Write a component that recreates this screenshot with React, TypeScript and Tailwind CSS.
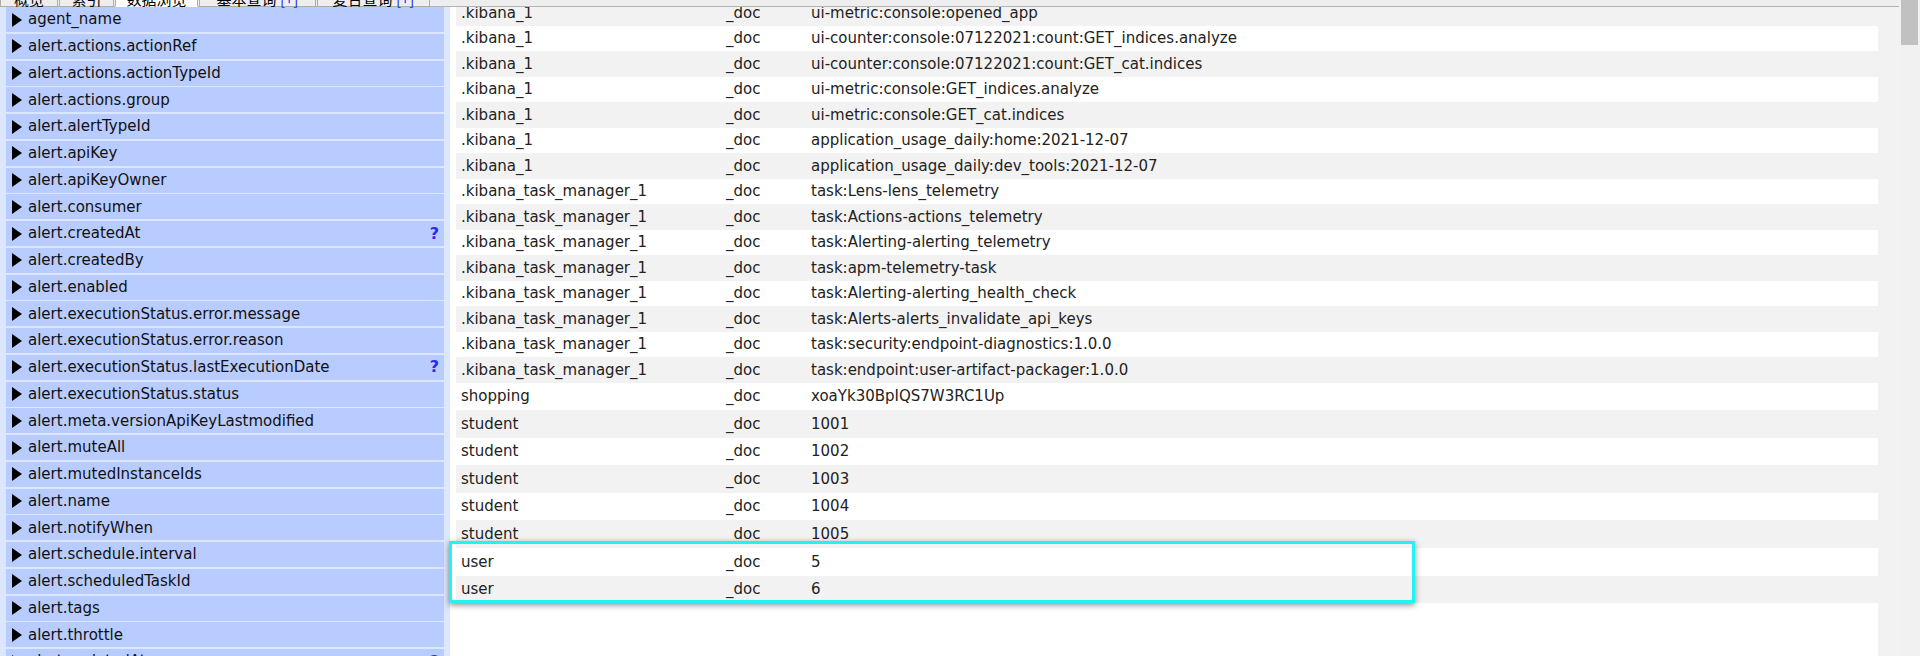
import React from "react";

const fields: { name: string; q?: boolean }[] = [
  { name: "agent_name" },
  { name: "alert.actions.actionRef" },
  { name: "alert.actions.actionTypeId" },
  { name: "alert.actions.group" },
  { name: "alert.alertTypeId" },
  { name: "alert.apiKey" },
  { name: "alert.apiKeyOwner" },
  { name: "alert.consumer" },
  { name: "alert.createdAt", q: true },
  { name: "alert.createdBy" },
  { name: "alert.enabled" },
  { name: "alert.executionStatus.error.message" },
  { name: "alert.executionStatus.error.reason" },
  { name: "alert.executionStatus.lastExecutionDate", q: true },
  { name: "alert.executionStatus.status" },
  { name: "alert.meta.versionApiKeyLastmodified" },
  { name: "alert.muteAll" },
  { name: "alert.mutedInstanceIds" },
  { name: "alert.name" },
  { name: "alert.notifyWhen" },
  { name: "alert.schedule.interval" },
  { name: "alert.scheduledTaskId" },
  { name: "alert.tags" },
  { name: "alert.throttle" },
  { name: "alert.updatedAt", q: true },
];

const rows: [string, string, string][] = [
  [".kibana_1", "_doc", "ui-metric:console:opened_app"],
  [".kibana_1", "_doc", "ui-counter:console:07122021:count:GET_indices.analyze"],
  [".kibana_1", "_doc", "ui-counter:console:07122021:count:GET_cat.indices"],
  [".kibana_1", "_doc", "ui-metric:console:GET_indices.analyze"],
  [".kibana_1", "_doc", "ui-metric:console:GET_cat.indices"],
  [".kibana_1", "_doc", "application_usage_daily:home:2021-12-07"],
  [".kibana_1", "_doc", "application_usage_daily:dev_tools:2021-12-07"],
  [".kibana_task_manager_1", "_doc", "task:Lens-lens_telemetry"],
  [".kibana_task_manager_1", "_doc", "task:Actions-actions_telemetry"],
  [".kibana_task_manager_1", "_doc", "task:Alerting-alerting_telemetry"],
  [".kibana_task_manager_1", "_doc", "task:apm-telemetry-task"],
  [".kibana_task_manager_1", "_doc", "task:Alerting-alerting_health_check"],
  [".kibana_task_manager_1", "_doc", "task:Alerts-alerts_invalidate_api_keys"],
  [".kibana_task_manager_1", "_doc", "task:security:endpoint-diagnostics:1.0.0"],
  [".kibana_task_manager_1", "_doc", "task:endpoint:user-artifact-packager:1.0.0"],
  ["shopping", "_doc", "xoaYk30BpIQS7W3RC1Up"],
  ["student", "_doc", "1001"],
  ["student", "_doc", "1002"],
  ["student", "_doc", "1003"],
  ["student", "_doc", "1004"],
  ["student", "_doc", "1005"],
  ["user", "_doc", "5"],
  ["user", "_doc", "6"],
];

const tabs: { label: string; plus?: boolean; w: string; active?: boolean }[] = [
  { label: "概览", w: "w-[58px]" },
  { label: "索引", w: "w-[55px]" },
  { label: "数据浏览", w: "w-[83px]", active: true },
  { label: "基本查询", w: "w-[117px]", plus: true },
  { label: "复合查询", w: "w-[113px]", plus: true },
];

function Triangle() {
  return (
    <svg width="10" height="14" viewBox="0 0 10 14" className="shrink-0">
      <polygon points="0,0 10,7 0,14" fill="#000" />
    </svg>
  );
}

export default function App() {
  return (
    <div
      className="relative w-[1920px] h-[656px] overflow-hidden flex bg-[#f2f2f2] text-[15px]"
      style={{ fontFamily: '"DejaVu Sans", Verdana, sans-serif' }}
    >
      {/* left field browser */}
      <div className="w-[450px] shrink-0 bg-[#dbe6ff] pt-[7px] px-[6px] flex flex-col gap-[1.75px]">
        {fields.map((f) => (
          <div
            key={f.name}
            className="h-[25px] shrink-0 bg-[#b8ccff] flex items-center pl-[6px] pr-[5px] text-[#111]"
          >
            <Triangle />
            <span className="ml-[6px] flex-1 whitespace-nowrap">{f.name}</span>
            {f.q && <span className="text-[#2a2af0] text-[16px] font-bold">?</span>}
          </div>
        ))}
      </div>

      {/* results table */}
      <div className="w-[1428px] shrink-0 bg-white pl-[6px]">
        <div className="flex flex-col text-[#222]">
          {rows.map((r, i) => (
            <div
              key={i}
              className={`flex items-center pl-[5px] whitespace-nowrap ${
                i < 15 ? "h-[25.5px]" : "h-[27.6px]"
              } ${i % 2 === 0 ? "bg-[#f2f2f2]" : "bg-white"}`}
            >
              <span className="w-[265px] shrink-0">{r[0]}</span>
              <span className="w-[85px] shrink-0">{r[1]}</span>
              <span>{r[2]}</span>
            </div>
          ))}
        </div>
      </div>

      <div className="flex-1 bg-[#f2f2f2]" />

      {/* scrollbar */}
      <div className="w-[21px] shrink-0 bg-[#f1f1f1] pl-[2px] pr-[2px]">
        <div className="h-[45px] bg-[#c1c1c1]" />
      </div>

      {/* top tab strip (scrolled, only bottom edge visible) */}
      <div className="absolute top-0 left-0 w-[1899px] h-[7px] bg-[#eeeeee] border-b border-[#b4b4b4]">
        <div className="absolute left-0 top-[-23px] flex">
          {tabs.map((t, i) => (
            <div
              key={t.label}
              className={`${t.w} ${i > 0 ? "ml-[1px]" : ""} h-[30px] border border-[#acacac] flex items-end justify-center text-[15px] leading-[15px] ${
                t.active ? "bg-white border-b-white" : "bg-[#eeeeee]"
              }`}
              style={{ fontFamily: '"Noto Sans CJK SC", "DejaVu Sans", sans-serif' }}
            >
              <span className="text-black whitespace-nowrap">
                {t.label}
                {t.plus && <span className="text-[#1b1bff]"> [+]</span>}
              </span>
            </div>
          ))}
        </div>
      </div>

      {/* highlight box */}
      <div className="absolute left-[449px] top-[541px] w-[966px] h-[62px] border-[3px] border-[#1ff3f3] shadow-[0_2px_6px_rgba(0,0,0,0.45)] pointer-events-none" />
    </div>
  );
}
